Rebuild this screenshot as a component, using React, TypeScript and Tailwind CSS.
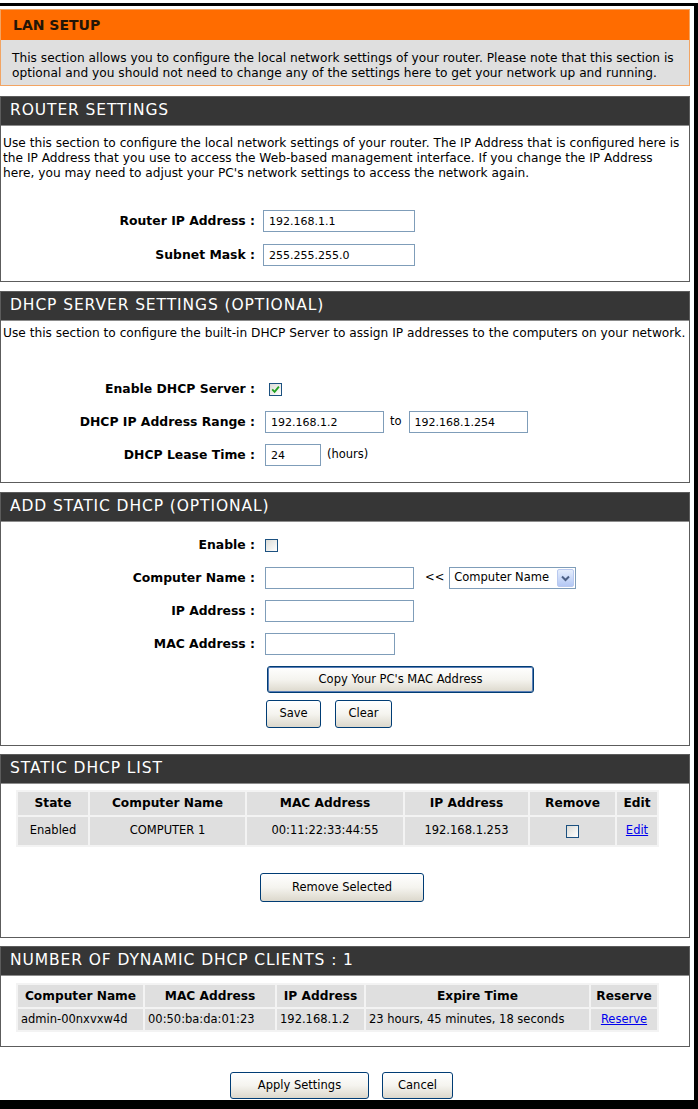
import React from "react";

type Kids = { children?: React.ReactNode };

function Box({ title, children }: { title: string } & Kids) {
  return (
    <section className="border border-[#5c5c5c] bg-white">
      <h2 className="flex h-[29px] items-center border-b border-[#8c8c8c] bg-[#363636] pl-[9px] text-[15.5px] tracking-[0.9px] text-white">
        {title}
      </h2>
      {children}
    </section>
  );
}

function TextBox({ value = "", className = "" }: { value?: string; className?: string }) {
  return (
    <input
      readOnly
      value={value}
      className={`h-[22px] border border-[#7f9db9] bg-white px-[5px] text-[11px] text-black outline-none ${className}`}
    />
  );
}

function XpCheck({ checked = false }: { checked?: boolean }) {
  return (
    <span className="inline-flex h-[13px] w-[13px] items-center justify-center border border-[#1c5180] bg-linear-to-br from-[#dcdcd7] to-white">
      {checked && (
        <svg width="9" height="9" viewBox="0 0 9 9">
          <path d="M1.2 4.3 L3.6 6.8 L7.9 1.6" stroke="#21a121" strokeWidth="1.8" fill="none" />
        </svg>
      )}
    </span>
  );
}

function XpButton({ className = "", children }: { className?: string } & Kids) {
  return (
    <button
      className={`flex items-center justify-center rounded-[3px] border border-[#003c74] bg-linear-to-b from-white via-[#f5f4ef] to-[#dcd8cc] text-[11.5px] text-black ${className}`}
    >
      {children}
    </button>
  );
}

function Label({ children }: Kids) {
  return (
    <span className="w-[254px] shrink-0 whitespace-nowrap text-right text-[12.4px] font-bold text-black">
      {children}
    </span>
  );
}

function Row({ children }: Kids) {
  return <div className="flex h-[22px] items-center">{children}</div>;
}

function Combo() {
  return (
    <div className="flex h-[22px] w-[127px] items-center border border-[#7f9db9] bg-white pl-[4px] text-[11.5px]">
      <span className="flex-1 whitespace-nowrap">Computer Name</span>
      <span className="mr-[1px] flex h-[18px] w-[17px] items-center justify-center rounded-[2px] border border-[#b9c9ef] bg-linear-to-b from-[#e6eefc] to-[#b4c8f5]">
        <svg width="9" height="7" viewBox="0 0 9 7">
          <path d="M1 1.5 L4.5 5 L8 1.5" stroke="#4d6185" strokeWidth="2" fill="none" />
        </svg>
      </span>
    </div>
  );
}

const para = "whitespace-nowrap text-[12.2px] leading-[15px]";
const th = "flex items-center justify-center bg-[#dfdfdf] text-[12.2px] font-bold text-black whitespace-nowrap";
const tdC = "flex items-center justify-center bg-[#dfdfdf] text-[11.5px] text-black whitespace-nowrap";
const tdL = "flex items-center bg-[#dfdfdf] pl-[3px] text-[11.5px] text-black whitespace-nowrap";

export default function App() {
  return (
    <div className="h-[1109px] w-[698px] bg-white pt-[3px] font-['DejaVu_Sans',sans-serif] text-black">
      <div className="flex h-[1106px] flex-col border-b-[9px] border-r-[4px] border-t-[3px] border-black pr-[4px] pt-[3px]">
        {/* LAN SETUP intro */}
        <section className="border border-[#f2a463] bg-[#dfdfdf]">
          <h1 className="flex h-[30px] items-center bg-[#ff6c00] pl-[12px] text-[14px] font-bold text-[#231507]">
            LAN SETUP
          </h1>
          <p className={`${para} px-[11px] pb-[4px] pt-[11px]`}>
            This section allows you to configure the local network settings of your router. Please note that this section is
            <br />
            optional and you should not need to change any of the settings here to get your network up and running.
          </p>
        </section>

        {/* Router settings */}
        <div className="mt-[10px]">
          <Box title="ROUTER SETTINGS">
            <p className={`${para} pl-[2px] pt-[10px]`}>
              Use this section to configure the local network settings of your router. The IP Address that is configured here is
              <br />
              the IP Address that you use to access the Web-based management interface. If you change the IP Address
              <br />
              here, you may need to adjust your PC's network settings to access the network again.
            </p>
            <div className="mt-[29px] flex flex-col gap-[12px] pb-[15px]">
              <Row>
                <Label>Router IP Address :</Label>
                <TextBox value="192.168.1.1" className="ml-[8px] w-[152px]" />
              </Row>
              <Row>
                <Label>Subnet Mask :</Label>
                <TextBox value="255.255.255.0" className="ml-[8px] w-[152px]" />
              </Row>
            </div>
          </Box>
        </div>

        {/* DHCP server */}
        <div className="mt-[9px]">
          <Box title="DHCP SERVER SETTINGS (OPTIONAL)">
            <p className={`${para} pl-[2px] pt-[5px]`}>
              Use this section to configure the built-in DHCP Server to assign IP addresses to the computers on your network.
            </p>
            <div className="mt-[37px] flex flex-col gap-[11px] pb-[16px]">
              <Row>
                <Label>Enable DHCP Server :</Label>
                <span className="ml-[14px] flex">
                  <XpCheck checked />
                </span>
              </Row>
              <Row>
                <Label>DHCP IP Address Range :</Label>
                <TextBox value="192.168.1.2" className="ml-[10px] w-[119px]" />
                <span className="ml-[6px] text-[11.5px]">to</span>
                <TextBox value="192.168.1.254" className="ml-[7px] w-[119px]" />
              </Row>
              <Row>
                <Label>DHCP Lease Time :</Label>
                <TextBox value="24" className="ml-[10px] w-[56px]" />
                <span className="ml-[6px] text-[11.5px]">(hours)</span>
              </Row>
            </div>
          </Box>
        </div>

        {/* Static DHCP entry */}
        <div className="mt-[9px]">
          <Box title="ADD STATIC DHCP (OPTIONAL)">
            <div className="flex flex-col gap-[11px] pt-[12px]">
              <Row>
                <Label>Enable :</Label>
                <span className="ml-[10px] flex">
                  <XpCheck />
                </span>
              </Row>
              <Row>
                <Label>Computer Name :</Label>
                <TextBox className="ml-[10px] w-[149px]" />
                <span className="ml-[11px] mr-[5px] text-[11.5px]">&lt;&lt;</span>
                <Combo />
              </Row>
              <Row>
                <Label>IP Address :</Label>
                <TextBox className="ml-[10px] w-[149px]" />
              </Row>
              <Row>
                <Label>MAC Address :</Label>
                <TextBox className="ml-[10px] w-[130px]" />
              </Row>
            </div>
            <div className="mt-[11px] pl-[266px]">
              <XpButton className="h-[27px] w-[267px] border-[#1f3f75] shadow-[inset_0_0_0_1px_#5a7fb8]">
                Copy Your PC's MAC Address
              </XpButton>
            </div>
            <div className="mt-[7px] flex gap-[14px] pb-[17px] pl-[265px]">
              <XpButton className="h-[28px] w-[55px]">Save</XpButton>
              <XpButton className="h-[28px] w-[57px]">Clear</XpButton>
            </div>
          </Box>
        </div>

        {/* Static DHCP list */}
        <div className="mt-[8px]">
          <Box title="STATIC DHCP LIST">
            <div className="pl-[15px] pt-[6px]">
              <div className="grid w-[643px] grid-cols-[70px_155px_156px_123px_85px_40px] grid-rows-[23px_28px] gap-[2px] bg-[#f3f3f3] p-[2px]">
                <div className={th}>State</div>
                <div className={th}>Computer Name</div>
                <div className={th}>MAC Address</div>
                <div className={th}>IP Address</div>
                <div className={th}>Remove</div>
                <div className={th}>Edit</div>
                <div className={tdC}>Enabled</div>
                <div className={tdC}>COMPUTER 1</div>
                <div className={tdC}>00:11:22:33:44:55</div>
                <div className={tdC}>192.168.1.253</div>
                <div className={tdC}>
                  <XpCheck />
                </div>
                <div className={tdC}>
                  <span className="text-[#0000ee] underline">Edit</span>
                </div>
              </div>
            </div>
            <div className="mt-[26px] flex justify-center pb-[35px] pr-[6px]">
              <XpButton className="h-[29px] w-[164px]">Remove Selected</XpButton>
            </div>
          </Box>
        </div>

        {/* Dynamic clients */}
        <div className="mt-[8px]">
          <Box title="NUMBER OF DYNAMIC DHCP CLIENTS : 1">
            <div className="pb-[14px] pl-[15px] pt-[7px]">
              <div className="grid w-[643px] grid-cols-[125px_130px_87px_223px_66px] grid-rows-[22px_21px] gap-[2px] bg-[#f3f3f3] p-[2px]">
                <div className={th}>Computer Name</div>
                <div className={th}>MAC Address</div>
                <div className={th}>IP Address</div>
                <div className={th}>Expire Time</div>
                <div className={th}>Reserve</div>
                <div className={tdL}>admin-00nxvxw4d</div>
                <div className={tdL}>00:50:ba:da:01:23</div>
                <div className={tdL}>192.168.1.2</div>
                <div className={tdL}>23 hours, 45 minutes, 18 seconds</div>
                <div className={tdC}>
                  <span className="text-[#0000ee] underline">Reserve</span>
                </div>
              </div>
            </div>
          </Box>
        </div>

        <div className="mt-[25px] flex justify-center gap-[13px] pr-[7px]">
          <XpButton className="h-[27px] w-[139px]">Apply Settings</XpButton>
          <XpButton className="h-[27px] w-[71px]">Cancel</XpButton>
        </div>
      </div>
    </div>
  );
}
